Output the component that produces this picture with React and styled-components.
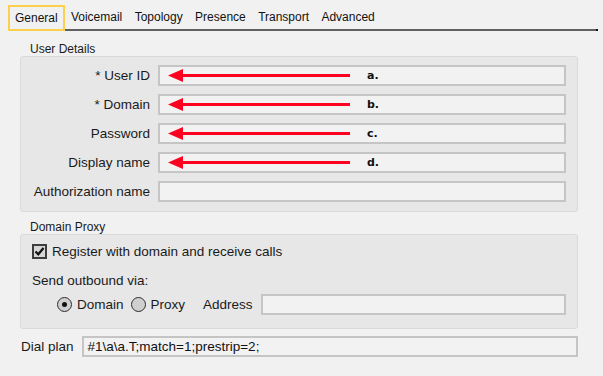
import React from 'react';
import styled, {createGlobalStyle} from 'styled-components';

const GlobalStyle = createGlobalStyle`
  html, body {
    margin: 0;
    padding: 0;
    background: #f1f1f1;
  }
  body {
    font-family: "Liberation Sans", Arial, sans-serif;
    font-size: 13.5px;
    color: #1a1a1a;
  }
`;

const Page = styled.div`
  width: 603px;
  height: 376px;
  overflow: hidden;
  box-sizing: border-box;
  padding-top: 5px;
`;

const TabBar = styled.div`
  display: flex;
  align-items: stretch;
  height: 26px;
  margin: 0 5px 0 8px;
`;

const Tab = styled.div`
  display: flex;
  align-items: center;
  padding: 0 ${props => (props.active ? '5px' : '6.2px')};
  font-size: 12px;
  color: #111;
  box-sizing: border-box;
  border: ${props => (props.active ? '2px solid #fbd04e' : 'none')};
  border-bottom: 2px solid ${props => (props.active ? '#fbd04e' : '#606060')};
`;

const TabFiller = styled.div`
  flex: 1;
  border-bottom: 2px solid #606060;
  position: relative;
  &::after {
    content: '';
    position: absolute;
    right: 0;
    bottom: -2px;
    width: 2px;
    height: 2px;
    background: #111;
  }
`;

const SectionTitle = styled.div`
  font-size: 12px;
  color: #1a1a1a;
  margin: ${props => props.margin || '11px 0 0 30px'};
  line-height: 14px;
`;

const GroupBox = styled.div`
  margin: 0 25px 0 20px;
  background: #e7e7e7;
  border: 1px solid #dadada;
  border-radius: 3px;
  box-sizing: border-box;
  padding: ${props => props.padding || '8px 11px 9px 0'};
`;

const FormGrid = styled.div`
  display: grid;
  grid-template-columns: 129px 1fr;
  column-gap: 8px;
  row-gap: 8px;
`;

const FieldLabel = styled.label`
  text-align: right;
  align-self: center;
  white-space: nowrap;
`;

const Input = styled.div`
  position: relative;
  height: 21px;
  box-sizing: border-box;
  border: 2px solid #c5c5c5;
  background: #f2f2f2;
  line-height: 17px;
  padding: 0 4px;
  color: #111;
  white-space: nowrap;
  flex: ${props => (props.grow ? 1 : 'none')};
`;

const Arrow = styled.svg`
  position: absolute;
  left: 8px;
  top: 2px;
`;

const Marker = styled.span`
  position: absolute;
  left: 207px;
  top: 0;
  font-family: "DejaVu Sans", sans-serif;
  font-weight: bold;
  font-size: 11px;
  line-height: 17px;
  color: #111;
`;

const Row = styled.div`
  display: flex;
  align-items: center;
  height: ${props => props.height || 15}px;
  margin-left: ${props => props.indent || 0}px;
  margin-top: ${props => props.top || 0}px;
`;

const CheckBox = styled.span`
  width: 15px;
  height: 15px;
  box-sizing: border-box;
  border: 2px solid #3d3d3d;
  background: #d6d6d6;
  display: inline-flex;
  align-items: center;
  justify-content: center;
  margin-right: 5px;
`;

const Radio = styled.span`
  width: 15px;
  height: 15px;
  box-sizing: border-box;
  border: 1.5px solid #2e2e2e;
  border-radius: 50%;
  background: #cfcfcf;
  display: inline-flex;
  align-items: center;
  justify-content: center;
  margin-right: 5px;
  &::after {
    content: '';
    display: ${props => (props.checked ? 'block' : 'none')};
    width: 5px;
    height: 5px;
    border-radius: 50%;
    background: #111;
  }
`;

const RadioText = styled.span`
  margin-right: ${props => props.gap || 0}px;
`;

const DialRow = styled.div`
  display: flex;
  align-items: center;
  margin: 7px 25px 0 21px;
  gap: 8px;
`;

const RedArrow = () => (
  <Arrow width="182" height="13" viewBox="0 0 182 13">
    <polygon points="0,6.5 15,0 15,13" fill="#ff0021" />
    <rect x="14" y="5" width="168" height="3" fill="#ff0021" />
  </Arrow>
);

const fields = [
  {label: '* User ID', mark: 'a.'},
  {label: '* Domain', mark: 'b.'},
  {label: 'Password', mark: 'c.'},
  {label: 'Display name', mark: 'd.'},
  {label: 'Authorization name'},
];

const tabs = ['General', 'Voicemail', 'Topology', 'Presence', 'Transport', 'Advanced'];

export default function App() {
  return (
    <Page>
      <GlobalStyle />
      <TabBar>
        {tabs.map((t, i) => (
          <Tab key={t} active={i === 0}>
            {t}
          </Tab>
        ))}
        <TabFiller />
      </TabBar>

      <SectionTitle>User Details</SectionTitle>
      <GroupBox>
        <FormGrid>
          {fields.map(f => (
            <React.Fragment key={f.label}>
              <FieldLabel>{f.label}</FieldLabel>
              <Input>
                {f.mark && <RedArrow />}
                {f.mark && <Marker>{f.mark}</Marker>}
              </Input>
            </React.Fragment>
          ))}
        </FormGrid>
      </GroupBox>

      <SectionTitle margin="8px 0 0 30px">Domain Proxy</SectionTitle>
      <GroupBox padding="9px 11px 13px 11px">
        <Row>
          <CheckBox>
            <svg width="11" height="11" viewBox="0 0 11 11">
              <path d="M1.5 5.5 L4.3 8.3 L9.5 2" stroke="#111" strokeWidth="2.2" fill="none" />
            </svg>
          </CheckBox>
          <span>Register with domain and receive calls</span>
        </Row>
        <Row top={14}>
          <span>Send outbound via:</span>
        </Row>
        <Row indent={25} top={6} height={21}>
          <Radio checked />
          <RadioText gap={7}>Domain</RadioText>
          <Radio />
          <RadioText gap={18}>Proxy</RadioText>
          <RadioText gap={8}>Address</RadioText>
          <Input grow />
        </Row>
      </GroupBox>

      <DialRow>
        <span>Dial plan</span>
        <Input grow>#1\a\a.T;match=1;prestrip=2;</Input>
      </DialRow>
    </Page>
  );
}
